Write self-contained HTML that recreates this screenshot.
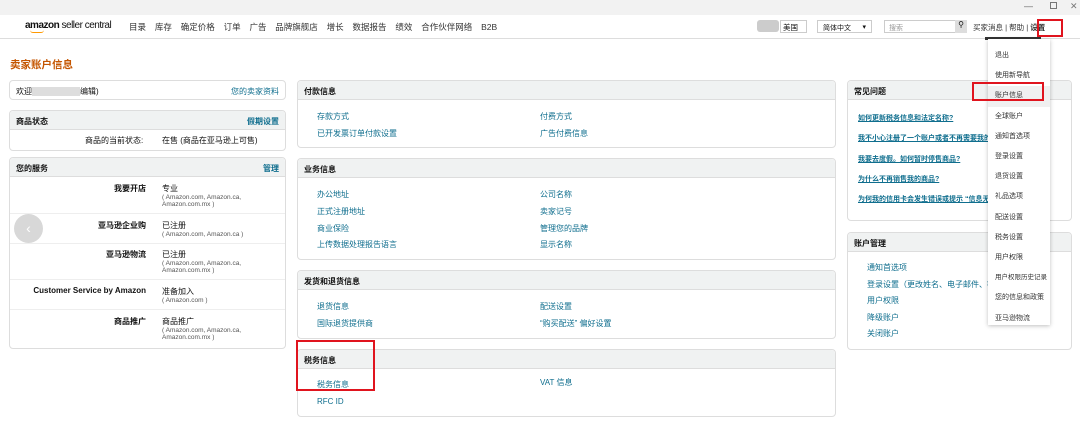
<!DOCTYPE html><html><head><meta charset="utf-8"><style>
*{margin:0;padding:0;box-sizing:border-box}
body{width:1080px;height:430px;overflow:hidden;background:#fff;font-family:"Liberation Sans","Noto Sans CJK SC",sans-serif;font-size:8px;color:#111;position:relative}
.a{position:absolute;white-space:nowrap}
.l{color:#0f6e8e}
.box{position:absolute;border:1px solid #ddd;border-radius:4px;background:#fff}
.hd{background:#f0f2f2;border-bottom:1px solid #ddd;height:19px;padding:5px 6px;font-weight:bold;font-size:8px;border-radius:4px 4px 0 0}
.red{position:absolute;border:2px solid #e0141e}
.sm{font-size:6.5px;color:#555}
</style></head><body>
<div class="a" style="left:0;top:0;width:1080px;height:15px;background:#f2f2f2"></div>
<div class="a" style="left:1024px;top:1px;color:#666;font-size:9px">—</div>
<div class="a" style="left:1050px;top:2px;width:7px;height:7px;border:1px solid #777"></div>
<div class="a" style="left:1070px;top:1px;color:#777;font-size:9px">✕</div>
<div class="a" style="left:0;top:38px;width:1080px;height:1px;background:#ddd"></div>
<div class="a" style="left:25px;top:20px;font-size:10px;font-weight:bold;color:#111;letter-spacing:-0.5px">amazon <span style="font-weight:normal">seller central</span></div>
<div class="a" style="left:30px;top:30px;width:14px;height:3px;border-bottom:1.5px solid #f90;border-radius:0 0 8px 8px"></div>
<div class="a" style="left:129px;top:21px;font-size:8.5px;color:#333;word-spacing:6.5px">目录 库存 确定价格 订单 广告 品牌旗舰店 增长 数据报告 绩效 合作伙伴网络 B2B</div>
<div class="a" style="left:757px;top:20px;width:22px;height:12px;background:#ccc;border-radius:3px"></div>
<div class="a" style="left:780px;top:20px;width:27px;height:13px;border:1px solid #ccc;font-size:7.5px;padding:1px 2px">美国</div>
<div class="a" style="left:817px;top:20px;width:55px;height:13px;border:1px solid #ccc;font-size:7px;padding:2px 5px">简体中文 <span style="float:right">▾</span></div>
<div class="a" style="left:884px;top:20px;width:82px;height:13px;border:1px solid #ccc;font-size:7px;color:#999;padding:2px 4px">搜索</div>
<div class="a" style="left:955px;top:20px;width:12px;height:13px;background:#ddd;font-size:8px;text-align:center">⚲</div>
<div class="a" style="left:973px;top:22px;font-size:7.5px;color:#333">买家消息 | 帮助 | <b>设置</b></div>
<div class="red" style="left:1037px;top:19px;width:26px;height:18px"></div>
<div class="a" style="left:10px;top:57px;font-size:10.5px;font-weight:bold;color:#c45500">卖家账户信息</div>

<div class="box" style="left:9px;top:80px;width:277px;height:20px;padding:5px 6px">欢迎<span style="display:inline-block;width:48px;height:9px;background:#ddd;vertical-align:middle"></span>编辑)<span class="l" style="float:right">您的卖家资料</span></div>
<div class="box" style="left:9px;top:110px;width:277px;height:41px"><div class="hd">商品状态<span class="l" style="float:right">假期设置</span></div><div class="a" style="left:75px;top:24px">商品的当前状态:</div><div class="a" style="left:152px;top:24px">在售 (商品在亚马逊上可售)</div></div>
<div class="box" style="left:9px;top:157px;width:277px;height:192px"><div class="hd">您的服务<span class="l" style="float:right">管理</span></div>
<div class="a" style="right:139px;top:25px;font-weight:bold">我要开店</div><div class="a" style="left:152px;top:25px">专业<div class="sm">( Amazon.com, Amazon.ca,<br>Amazon.com.mx )</div></div>
<div class="a" style="left:0;top:55px;width:275px;height:1px;background:#eee"></div>
<div class="a" style="right:139px;top:62px;font-weight:bold">亚马逊企业购</div><div class="a" style="left:152px;top:62px">已注册<div class="sm">( Amazon.com, Amazon.ca )</div></div>
<div class="a" style="left:0;top:85px;width:275px;height:1px;background:#eee"></div>
<div class="a" style="right:139px;top:91px;font-weight:bold">亚马逊物流</div><div class="a" style="left:152px;top:91px">已注册<div class="sm">( Amazon.com, Amazon.ca,<br>Amazon.com.mx )</div></div>
<div class="a" style="left:0;top:121px;width:275px;height:1px;background:#eee"></div>
<div class="a" style="right:139px;top:128px;font-weight:bold">Customer Service by Amazon</div><div class="a" style="left:152px;top:128px">准备加入<div class="sm">( Amazon.com )</div></div>
<div class="a" style="left:0;top:151px;width:275px;height:1px;background:#eee"></div>
<div class="a" style="right:139px;top:158px;font-weight:bold">商品推广</div><div class="a" style="left:152px;top:158px">商品推广<div class="sm">( Amazon.com, Amazon.ca,<br>Amazon.com.mx )</div></div>
</div>
<div class="a" style="left:14px;top:214px;width:29px;height:29px;border-radius:50%;background:#d8d8d8;color:#fff;font-size:14px;text-align:center;line-height:28px">‹</div>

<div class="box" style="left:297px;top:80px;width:539px;height:68px"><div class="hd">付款信息</div><div class="a l" style="left:19px;top:28px;line-height:16.5px">存款方式<br>已开发票订单付款设置</div><div class="a l" style="left:242px;top:28px;line-height:16.5px">付费方式<br>广告付费信息</div></div>
<div class="box" style="left:297px;top:158px;width:539px;height:102px"><div class="hd">业务信息</div><div class="a l" style="left:19px;top:28px;line-height:16.8px">办公地址<br>正式注册地址<br>商业保险<br>上传数据处理报告语言</div><div class="a l" style="left:242px;top:28px;line-height:16.8px">公司名称<br>卖家记号<br>管理您的品牌<br>显示名称</div></div>
<div class="box" style="left:297px;top:270px;width:539px;height:69px"><div class="hd">发货和退货信息</div><div class="a l" style="left:19px;top:28px;line-height:16.8px">退货信息<br>国际退货提供商</div><div class="a l" style="left:242px;top:28px;line-height:16.8px">配送设置<br>“购买配送” 偏好设置</div></div>
<div class="box" style="left:297px;top:349px;width:539px;height:68px"><div class="hd">税务信息</div><div class="a l" style="left:19px;top:27px;line-height:16.8px">税务信息<br>RFC ID</div><div class="a l" style="left:242px;top:27px">VAT 信息</div></div>
<div class="red" style="left:296px;top:340px;width:79px;height:51px"></div>

<div class="box" style="left:847px;top:80px;width:225px;height:141px"><div class="hd">常见问题</div><div class="a l" style="left:10px;top:28px;line-height:20.3px;font-size:7px;font-weight:bold;text-decoration:underline">如何更新税务信息和法定名称?<br>我不小心注册了一个账户或者不再需要我的账户<br>我要去度假。如何暂时停售商品?<br>为什么不再销售我的商品?<br>为何我的信用卡会发生错误或提示 “信息无效”</div></div>
<div class="box" style="left:847px;top:232px;width:225px;height:118px"><div class="hd">账户管理</div><div class="a l" style="left:19px;top:27px;line-height:16.6px">通知首选项<br>登录设置（更改姓名、电子邮件、密码<br>用户权限<br>降级账户<br>关闭账户</div></div>

<div class="a" style="left:985px;top:37px;width:56px;height:3px;background:#333"></div>
<div class="a" style="left:988px;top:39px;width:62px;height:286px;background:#fff;box-shadow:0 1px 4px rgba(0,0,0,.25);font-size:7px;color:#333;padding:7px 0 0 7px;line-height:20.2px">退出<br>使用新导航<br><span style="display:block;margin-left:-7px;padding-left:7px;background:#f0f0f0">账户信息</span>全球账户<br>通知首选项<br>登录设置<br>退货设置<br>礼品选项<br>配送设置<br>税务设置<br>用户权限<br><span style="font-size:6.5px">用户权限历史记录</span><br>您的信息和政策<br>亚马逊物流</div>
<div class="red" style="left:972px;top:82px;width:72px;height:19px"></div>
</body></html>
